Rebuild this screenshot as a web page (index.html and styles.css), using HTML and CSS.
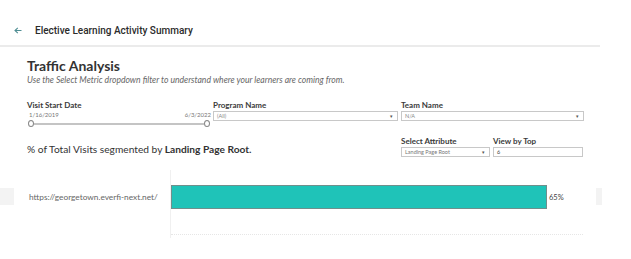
FILE: index.html
```html
<!DOCTYPE html>
<html lang="en">
<head>
    <meta charset="UTF-8">
    <title>Elective Learning Activity Summary</title>
    <link rel="stylesheet" href="styles.css">
</head>
<body>
    <header class="topbar">
        <svg class="back" width="8" height="7" viewBox="0 0 8 7">
            <path d="M7.5 3.5H1M3.8 0.8L1 3.5l2.8 2.7" fill="none" stroke="#4f8e93" stroke-width="1.1"/>
        </svg>
        <span class="page-title">Elective Learning Activity Summary</span>
    </header>

    <main class="dash">
        <h1>Traffic Analysis</h1>
        <p class="subtitle">Use the Select Metric dropdown filter to understand where your learners are coming from.</p>

        <div class="filters">
            <div class="filter date-filter">
                <label>Visit Start Date</label>
                <div class="dates">
                    <span>1/16/2019</span>
                    <span>6/3/2022</span>
                </div>
                <div class="slider">
                    <span class="knob"></span>
                    <span class="track"></span>
                    <span class="knob"></span>
                </div>
            </div>
            <div class="filter program">
                <label>Program Name</label>
                <div class="select"><span>(All)</span><span class="caret">&#9662;</span></div>
            </div>
            <div class="filter team">
                <label>Team Name</label>
                <div class="select"><span>N/A</span><span class="caret">&#9662;</span></div>
            </div>
        </div>

        <div class="chart-head">
            <h2>% of Total Visits segmented by <b>Landing Page Root.</b></h2>
            <div class="filter attr">
                <label>Select Attribute</label>
                <div class="select"><span>Landing Page Root</span><span class="caret">&#9662;</span></div>
            </div>
            <div class="filter top">
                <label>View by Top</label>
                <div class="select input"><span>6</span></div>
            </div>
        </div>
    </main>

    <section class="chart">
        <div class="stub"></div>
        <div class="row-label">https://georgetown.everfi-next.net/</div>
        <div class="plot">
            <div class="bar-row">
                <div class="bar" style="width: 376px"></div>
                <span class="value">65%</span>
            </div>
            <div class="gridline"></div>
        </div>
        <div class="stub right"></div>
    </section>
</body>
</html>
```

FILE: styles.css
```css
* {
    margin: 0;
    padding: 0;
    box-sizing: border-box;
}

body {
    width: 631px;
    height: 259px;
    background: #fff;
    font-family: 'Lato', sans-serif;
    color: #333;
    overflow: hidden;
}

/* Header */
.topbar {
    width: 600px;
    height: 47px;
    display: flex;
    align-items: center;
    padding-left: 14px;
    padding-top: 16px;
    padding-bottom: 1px;
    border-bottom: 2px solid #ebebeb;
}

.back {
    margin-right: 13px;
}

.page-title {
    font-family: 'Roboto', sans-serif;
    font-weight: 500;
    font-size: 10px;
    color: #2b2b2b;
}

/* Dashboard */
.dash {
    padding-left: 27px;
    width: 600px;
}

.dash h1 {
    font-size: 14px;
    font-weight: 700;
    color: #333;
    margin-top: 10px;
    line-height: 17px;
}

.subtitle {
    font-size: 8.6px;
    font-style: italic;
    color: #666;
    line-height: 11px;
    margin-top: 1px;
}

.filters {
    display: flex;
    margin-top: 14px;
    height: 32px;
}

.filter label {
    display: block;
    font-size: 8px;
    font-weight: 700;
    color: #3a3a3a;
    line-height: 10px;
}

.date-filter {
    width: 186px;
}

.dates {
    display: flex;
    justify-content: space-between;
    font-size: 6px;
    color: #777;
    padding: 0 2px 0 2px;
    line-height: 8px;
    margin-top: 1px;
}

.slider {
    display: flex;
    align-items: center;
    margin-top: 1px;
    padding-left: 1px;
    width: 183px;
}

.track {
    flex: 1;
    height: 2px;
    background: #c4c4c4;
}

.knob {
    width: 6px;
    height: 7px;
    border: 1px solid #888;
    border-radius: 50%;
    background: #fff;
}

.select {
    display: flex;
    justify-content: space-between;
    align-items: center;
    height: 10px;
    margin-top: 1px;
    border: 1px solid #c8c8c8;
    padding: 0 4px 0 3px;
    font-size: 5.5px;
    color: #888;
}

.caret {
    font-size: 5px;
    color: #555;
}

.program {
    width: 185px;
}

.team {
    width: 183px;
    margin-left: 3px;
}

.chart-head {
    display: flex;
    align-items: flex-start;
    margin-top: 4px;
}

.chart-head h2 {
    font-size: 10.2px;
    font-weight: 400;
    color: #333;
    width: 374px;
    margin-top: 7px;
}

.chart-head h2 b {
    font-weight: 700;
}

.attr {
    width: 89px;
}

.attr .select {
    color: #777;
}

.top {
    width: 90px;
    margin-left: 3px;
}

.input {
    color: #444;
}

/* Chart */
.chart {
    display: flex;
    margin-top: 13px;
    height: 90px;
}

.stub {
    width: 14px;
    height: 17px;
    margin-top: 18px;
    background: #f3f3f3;
}

.stub.right {
    width: 6px;
}

.row-label {
    width: 156px;
    padding-left: 15px;
    font-size: 8.3px;
    color: #666;
    line-height: 10px;
    margin-top: 22px;
}

.plot {
    width: 426px;
    border-left: 1px solid #f0f0f0;
    height: 68px;
}

.bar-row {
    display: flex;
    align-items: center;
    margin-top: 15px;
}

.bar {
    height: 24px;
    background: #1fc3b8;
    border: 1px solid #6f8f8c;
}

.value {
    font-size: 7.5px;
    color: #444;
    margin-left: 2px;
}

.gridline {
    margin-top: 25px;
    width: 412px;
    border-top: 1px dotted #e6e6e6;
}
```
